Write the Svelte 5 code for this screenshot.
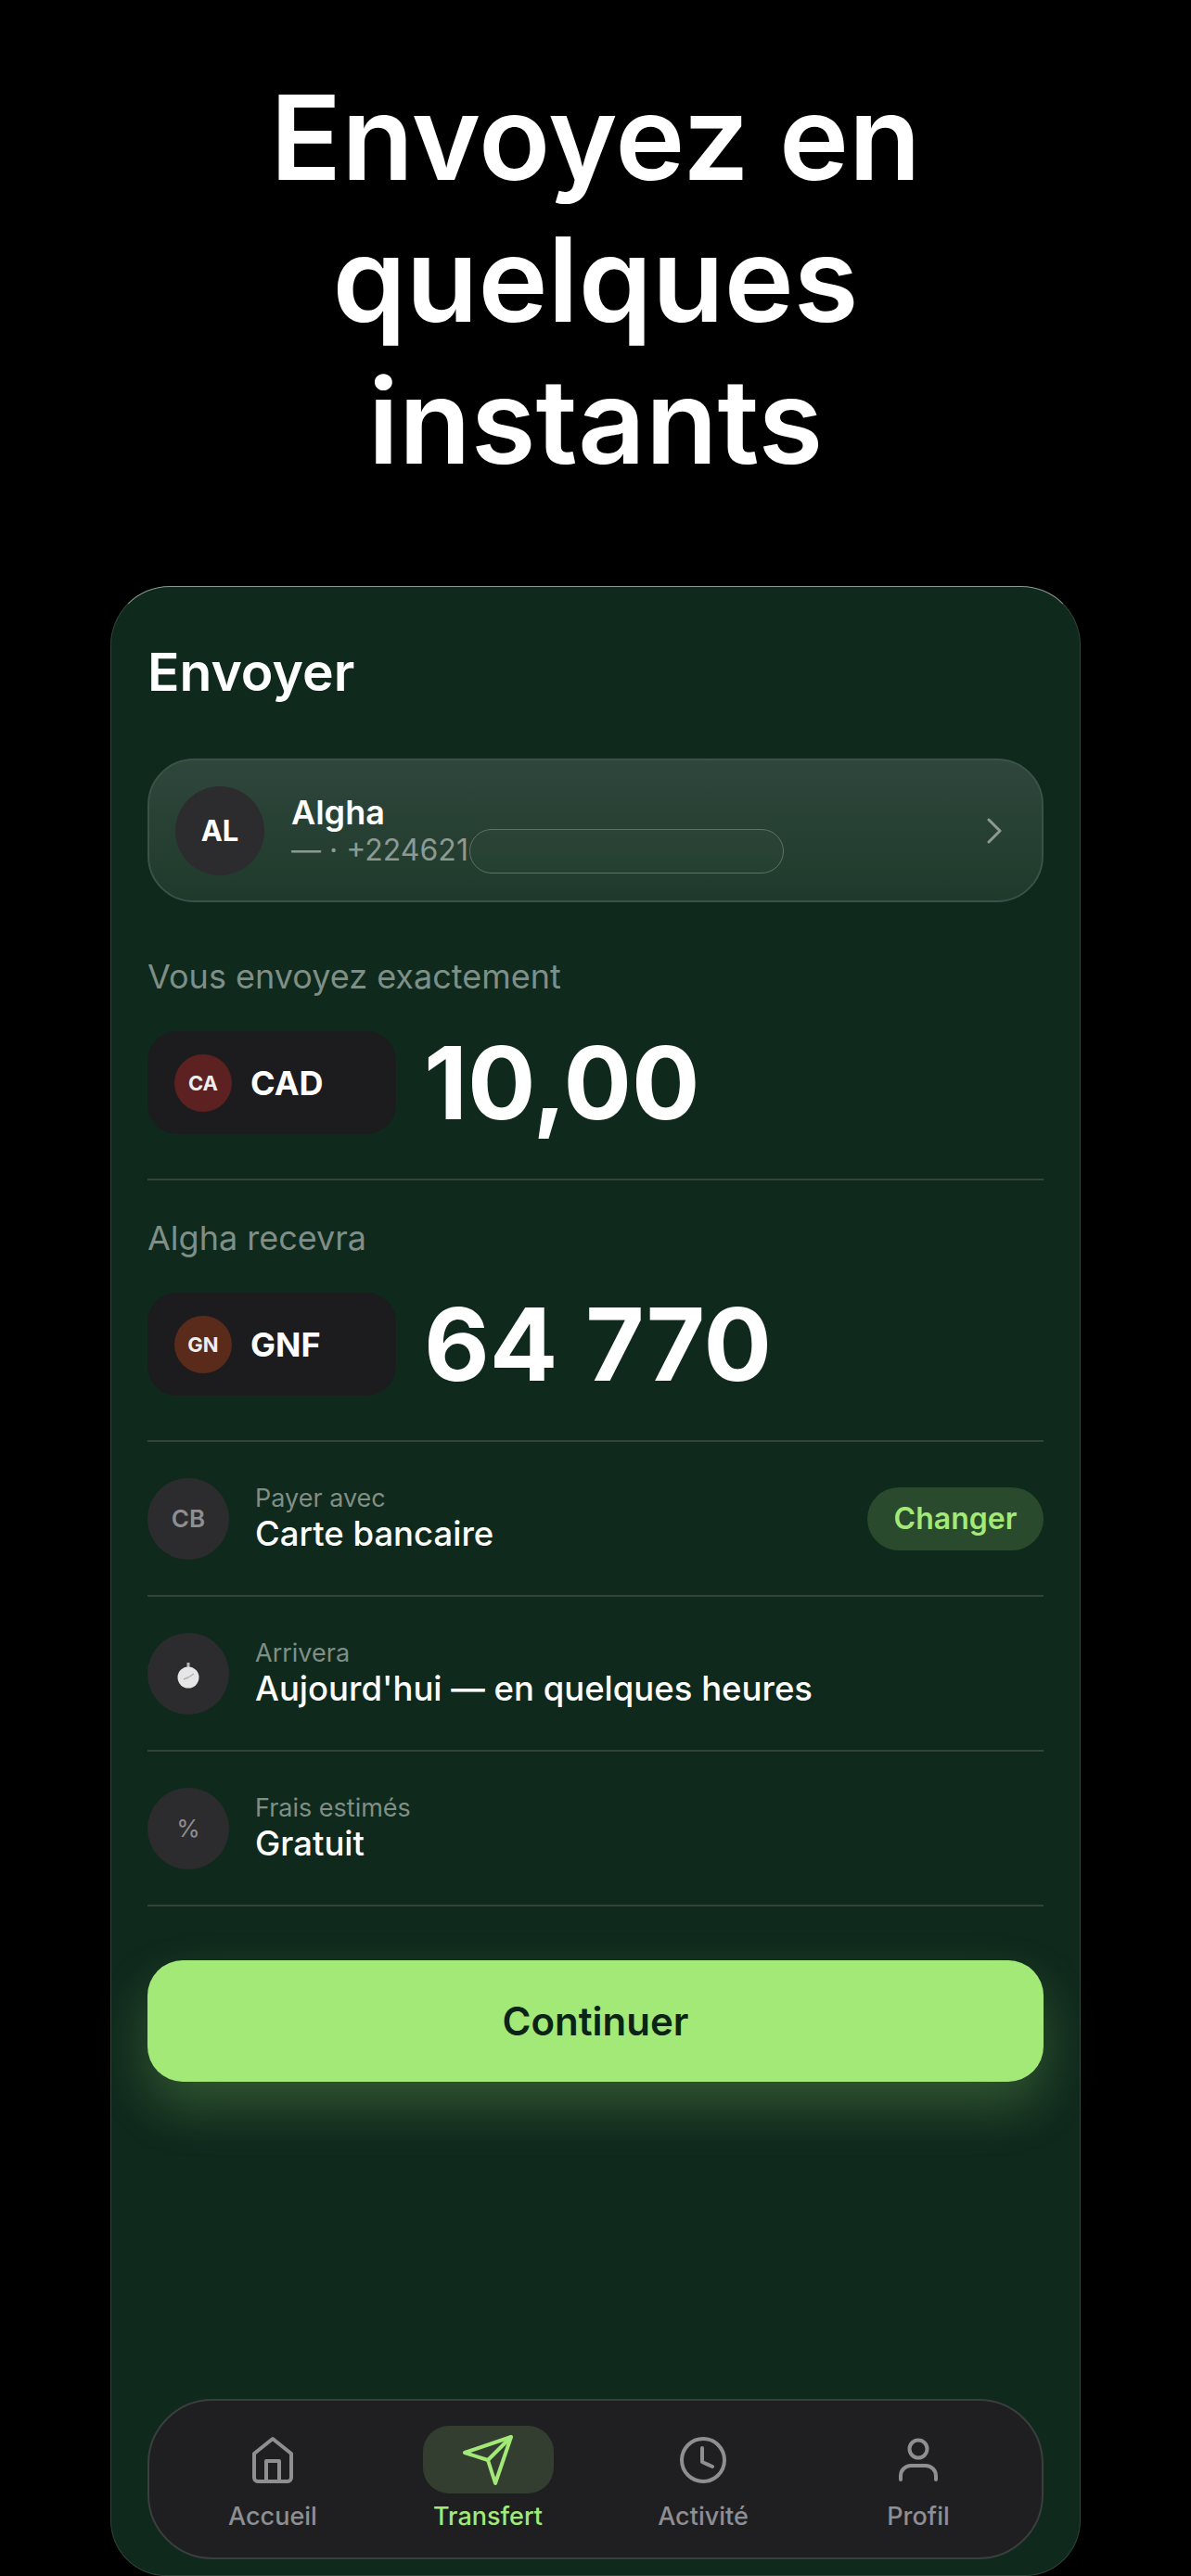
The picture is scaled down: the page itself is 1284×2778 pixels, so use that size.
<script>
  let amounts = [
    { label: "Vous envoyez exactement", flag: "CA", code: "CAD", value: "10,00", tint: "ca" },
    { label: "Algha recevra", flag: "GN", code: "GNF", value: "64 770", tint: "gn" },
  ];

  let details = [
    { icon: "CB", label: "Payer avec", value: "Carte bancaire", action: "Changer" },
    { icon: "timer", label: "Arrivera", value: "Aujourd'hui — en quelques heures" },
    { icon: "%", label: "Frais estimés", value: "Gratuit" },
  ];

  let tabs = [
    { id: "home", label: "Accueil" },
    { id: "send", label: "Transfert", active: true },
    { id: "clock", label: "Activité" },
    { id: "user", label: "Profil" },
  ];
</script>

<div class="page">
  <h1 class="headline">Envoyez en quelques instants</h1>

  <div class="phone">
    <h2 class="title">Envoyer</h2>

    <div class="contact">
      <div class="avatar">AL</div>
      <div class="contact-text">
        <div class="name">Algha</div>
        <div class="phone-number">— · +224621</div>
      </div>
      <div class="redacted"></div>
      <svg class="chevron" width="18" height="28" viewBox="0 0 18 28" fill="none" stroke="#8c9a92" stroke-width="3" stroke-linecap="round" stroke-linejoin="round">
        <path d="M3 2 L15 14 L3 26" />
      </svg>
    </div>

    {#each amounts as a}
      <div class="amount">
        <div class="amount-label">{a.label}</div>
        <div class="amount-row">
          <div class="currency">
            <span class="flag {a.tint}">{a.flag}</span>
            <span class="code">{a.code}</span>
          </div>
          <div class="value">{a.value}</div>
        </div>
      </div>
    {/each}

    {#each details as d}
      <div class="detail">
        <div class="detail-icon" class:plain={d.icon === "%"}>
          {#if d.icon === "timer"}
            <svg width="28" height="36" viewBox="0 0 28 36">
              <rect x="12.5" y="6" width="3" height="6" fill="#b5b5b5" />
              <circle cx="14" cy="22" r="11.5" fill="#e6e6e6" />
              <path d="M14 22 L20 18 M14 22 L9 24" stroke="#b0b0b0" stroke-width="1.4" fill="none" />
            </svg>
          {:else}
            {d.icon}
          {/if}
        </div>
        <div class="detail-text">
          <div class="detail-label">{d.label}</div>
          <div class="detail-value">{d.value}</div>
        </div>
        {#if d.action}
          <button class="change">{d.action}</button>
        {/if}
      </div>
    {/each}

    <button class="continue">Continuer</button>

    <nav class="tabs">
      {#each tabs as t}
        <div class="tab" class:active={t.active}>
          <div class="tab-icon">
            {#if t.id === "home"}
              <svg width="46" height="52" viewBox="0 0 46 52" fill="none" stroke="currentColor" stroke-width="4" stroke-linejoin="round">
                <path d="M3 19 L23 3 L43 19 V45 a4 4 0 0 1 -4 4 H7 a4 4 0 0 1 -4 -4 Z" />
                <path d="M16 49 V27 H30 V49" />
              </svg>
            {:else if t.id === "send"}
              <svg width="56" height="56" viewBox="0 0 56 56" fill="none" stroke="currentColor" stroke-width="4" stroke-linejoin="round">
                <path d="M53 3 L3 20 L28 28 L36 53 Z" />
                <path d="M53 3 L28 28" />
              </svg>
            {:else if t.id === "clock"}
              <svg width="52" height="52" viewBox="0 0 52 52" fill="none" stroke="currentColor" stroke-width="4" stroke-linecap="round" stroke-linejoin="round">
                <circle cx="26" cy="26" r="23" />
                <path d="M25 13 V28 L36 33" />
              </svg>
            {:else}
              <svg width="44" height="48" viewBox="0 0 44 48" fill="none" stroke="currentColor" stroke-width="4" stroke-linecap="round">
                <circle cx="22" cy="12" r="9.5" />
                <path d="M3 45 V41 a11 11 0 0 1 11 -11 H30 a11 11 0 0 1 11 11 V45" />
              </svg>
            {/if}
          </div>
          <div class="tab-label">{t.label}</div>
        </div>
      {/each}
    </nav>
  </div>
</div>

<style>
  :global(body) {
    margin: 0;
    background: #000;
  }

  .page {
    height: 2778px;
    overflow: hidden;
    background: #000;
    font-family: Inter, "Liberation Sans", sans-serif;
    color: #fff;
  }

  .headline {
    width: 900px;
    height: 632px;
    margin: 0 auto;
    padding-top: 72px;
    box-sizing: border-box;
    font-size: 127px;
    line-height: 153px;
    font-weight: 600;
    text-align: center;
  }

  .phone {
    height: 2146px;
    margin: 0 119px;
    padding: 57px 39px 17px;
    box-sizing: border-box;
    display: flex;
    flex-direction: column;
    background: #0f291c;
    border: 1px solid #2f4539;
    border-top-color: #8b998f;
    border-radius: 64px 64px 60px 60px;
  }

  .title {
    margin: 0 0 58px;
    font-size: 57px;
    line-height: 70px;
    font-weight: 600;
  }

  .contact {
    position: relative;
    height: 155px;
    padding: 0 30px 0 28px;
    box-sizing: border-box;
    display: flex;
    align-items: center;
    gap: 29px;
    margin-bottom: 18px;
    border: 2px solid #3b5247;
    border-radius: 50px;
    background: linear-gradient(180deg, #2f463c 0%, #1f3a2b 100%);
  }

  .avatar {
    width: 96px;
    height: 96px;
    flex: none;
    display: flex;
    align-items: center;
    justify-content: center;
    border-radius: 50%;
    background: #2c2c2e;
    font-size: 31px;
    font-weight: 700;
  }

  .contact-text {
    flex: 1;
  }

  .name {
    font-size: 36px;
    line-height: 42px;
    font-weight: 600;
  }

  .phone-number {
    margin-top: 1px;
    font-size: 32px;
    line-height: 38px;
    color: #8c9a92;
  }

  .redacted {
    position: absolute;
    left: 345px;
    top: 74px;
    width: 339px;
    height: 48px;
    box-sizing: border-box;
    border: 1px solid #5d7267;
    border-radius: 24px;
    background: linear-gradient(180deg, #2c4338 0%, #24402f 100%);
  }

  .chevron {
    flex: none;
    margin-right: 12px;
  }

  .amount {
    padding: 40px 0 48px;
    border-bottom: 2px solid #33443b;
  }

  .amount-label {
    font-size: 36px;
    line-height: 44px;
    color: #7f8f87;
  }

  .amount-row {
    margin-top: 37px;
    display: flex;
    align-items: center;
    gap: 30px;
  }

  .currency {
    width: 268px;
    height: 111px;
    padding-left: 29px;
    box-sizing: border-box;
    display: flex;
    align-items: center;
    gap: 20px;
    border-radius: 32px;
    background: #1c1c1e;
  }

  .flag {
    width: 62px;
    height: 62px;
    display: flex;
    align-items: center;
    justify-content: center;
    border-radius: 50%;
    font-size: 22px;
    font-weight: 700;
    color: #eee;
  }

  .flag.ca {
    background: #5c2120;
  }

  .flag.gn {
    background: #5a2a1b;
  }

  .code {
    font-size: 36px;
    font-weight: 700;
  }

  .value {
    font-size: 109px;
    line-height: 111px;
    font-weight: 700;
    word-spacing: 4px;
  }

  .detail {
    padding: 38.5px 0;
    display: flex;
    align-items: center;
    gap: 28px;
    border-bottom: 2px solid #33443b;
  }

  .detail-icon {
    width: 88px;
    height: 88px;
    flex: none;
    display: flex;
    align-items: center;
    justify-content: center;
    border-radius: 50%;
    background: #2c2c2e;
    font-size: 26px;
    font-weight: 600;
    color: #8e8e93;
  }

  .detail-icon.plain {
    font-weight: 400;
  }

  .detail-text {
    flex: 1;
  }

  .detail-label {
    font-size: 27px;
    line-height: 32px;
    color: #7f8f87;
  }

  .detail-value {
    font-size: 36.5px;
    line-height: 44px;
    font-weight: 500;
  }

  .change {
    width: 190px;
    height: 68px;
    padding: 0;
    border: none;
    border-radius: 34px;
    background: #2a4a2e;
    font-family: inherit;
    font-size: 32px;
    font-weight: 600;
    color: #a3e978;
  }

  .continue {
    height: 131px;
    margin-top: 58px;
    padding: 0;
    border: none;
    border-radius: 38px;
    background: #a3e978;
    box-shadow: 0 26px 56px rgba(163, 233, 120, 0.24);
    font-family: inherit;
    font-size: 42px;
    font-weight: 600;
    color: #0c2416;
  }

  .tabs {
    height: 173px;
    margin-top: auto;
    padding: 0 17px;
    box-sizing: border-box;
    display: grid;
    grid-template-columns: repeat(4, 1fr);
    border: 2px solid #3a3f3e;
    border-radius: 70px;
    background: #1f1f22;
  }

  .tab {
    padding-top: 27px;
    display: flex;
    flex-direction: column;
    align-items: center;
    color: #8e8e93;
  }

  .tab.active {
    color: #a3e978;
  }

  .tab-icon {
    width: 141px;
    height: 73px;
    display: flex;
    align-items: center;
    justify-content: center;
    border-radius: 28px;
  }

  .tab.active .tab-icon {
    background: #343e30;
  }

  .tab-label {
    margin-top: 8px;
    font-size: 27px;
    line-height: 34px;
    font-weight: 500;
  }
</style>
